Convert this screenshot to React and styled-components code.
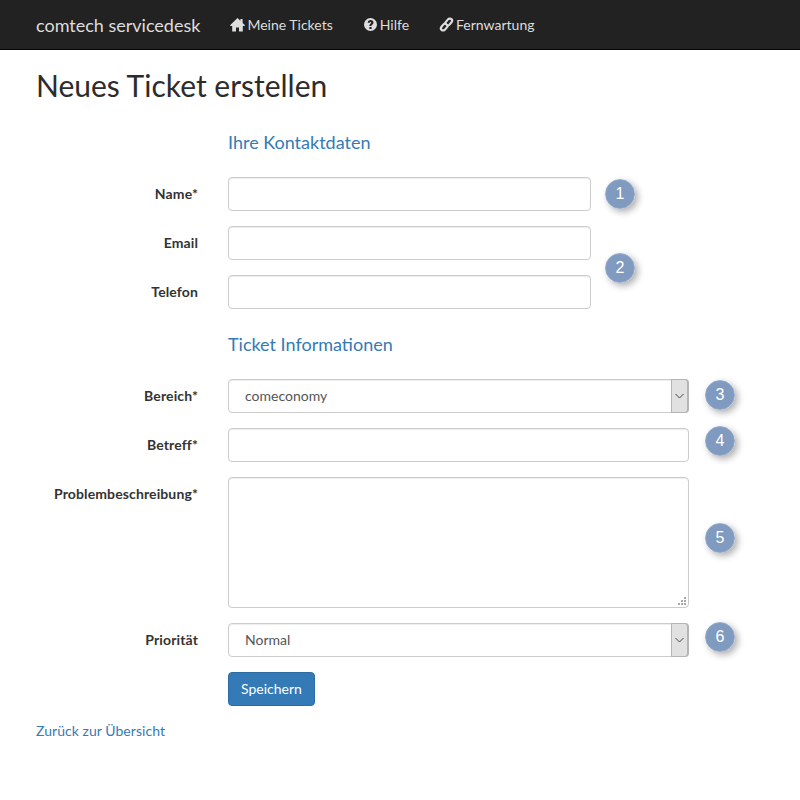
import React from "react";
import styled, { createGlobalStyle } from "styled-components";

const Global = createGlobalStyle`
  * { box-sizing: border-box; }
  html, body { margin: 0; padding: 0; background: #fff; }
  body { font-family: Lato, "Liberation Sans", sans-serif; font-size: 14px; line-height: 20px; color: #333; }
`;

const Navbar = styled.nav`
  display: flex; align-items: center; height: 50px; padding-left: 36px;
  background: #222; border-bottom: 1px solid #080808;
`;
const Brand = styled.a`
  font-size: 18px; line-height: 20px; color: #ddd; text-decoration: none; margin-right: 15px;
`;
const NavLink = styled.a`
  display: flex; align-items: center; gap: 2px; padding: 0 15px; color: #ddd; text-decoration: none;
  font-size: 14px;
  svg { width: 15px; height: 15px; flex: none; fill: #ddd; }
`;
const Main = styled.main`
  padding: 0 36px;
`;
const Title = styled.h1`
  margin: 19px 0 30px; font-size: 30px; line-height: 33px; font-weight: 400; color: #2c2c2c;
`;
const FormGrid = styled.form`
  display: grid; grid-template-columns: 162px 393px 98px 16px 30px; row-gap: 15px;
`;
const Heading = styled.h4`
  grid-column: 2 / 6; margin: ${p => p.$first ? "0 0 10px 30px" : "10px 0 10px 30px"};
  font-size: 18px; line-height: 20px; font-weight: 400; color: #337ab7;
`;
const Label = styled.label`
  grid-column: 1; text-align: right; font-weight: 700; padding-top: 7px; color: #333; letter-spacing: .12px;
`;
const Input = styled.input`
  display: block; height: 34px; margin-left: 30px; width: calc(100% - 30px); padding: 6px 16px;
  border: 1px solid #ccc; border-radius: 4px; background: #fff; font: inherit; color: #555;
  box-shadow: inset 0 1px 1px rgba(0,0,0,.075);
`;
const Short = styled.div`
  grid-column: 2;
`;
const Wide = styled.div`
  grid-column: 2 / 4; position: relative;
`;
const Area = styled.textarea`
  display: block; height: 131px; margin-left: 30px; width: calc(100% - 30px); padding: 6px 16px;
  border: 1px solid #ccc; border-radius: 4px; background: #fff; font: inherit; color: #555; resize: none;
  box-shadow: inset 0 1px 1px rgba(0,0,0,.075);
`;
const Grip = styled.svg`
  position: absolute; right: 3px; bottom: 3px; width: 8px; height: 8px; fill: #a8a8a8; pointer-events: none;
`;
const Select = styled.select`
  display: block; height: 34px; margin-left: 30px; width: calc(100% - 30px); padding: 6px 16px;
  border: 1px solid #ccc; border-radius: 4px; background: #fff; font: inherit; color: #555;
  appearance: none; box-shadow: inset 0 1px 1px rgba(0,0,0,.075);
`;
const Arrow = styled.span`
  position: absolute; top: 0; right: 0; bottom: 0; width: 18px; display: flex;
  align-items: center; justify-content: center; pointer-events: none;
  background: #e1e1e1; border: 1px solid #b4b4b4; border-right-width: 2px; border-radius: 0 4px 4px 0;
`;
const Badge = styled.div`
  grid-column: ${p => p.$wide ? "4 / 6" : "3 / 6"};
  grid-row: ${p => p.$span ? `span ${p.$span}` : "auto"};
  justify-self: ${p => p.$wide ? "end" : "start"};
  margin-left: ${p => p.$wide ? 0 : 14}px;
  align-self: ${p => p.$center ? "center" : "start"};
  margin-top: ${p => p.$top || 0}px;
  width: 30px; height: 30px; border-radius: 50%;
  display: flex; align-items: center; justify-content: center;
  background: radial-gradient(circle, #7f9abf 0%, #819bc0 70%, #8ea6c8 100%);
  border: 1px solid #92a9ca; color: #fff; font-size: 16px; font-family: "Liberation Sans", sans-serif;
  box-shadow: 3px 3px 7px rgba(0,0,0,.32);
`;
const Actions = styled.div`
  grid-column: 2 / 4; padding-left: 30px;
`;
const Button = styled.button`
  display: block; height: 34px; padding: 0 12px; background: #337ab7; color: #fff; font: inherit;
  border: 1px solid #2e6da4; border-radius: 4px;
`;
const BackLink = styled.a`
  display: block; margin-top: 15px; color: #337ab7; text-decoration: none; letter-spacing: .05px;
`;

const Chevron = () => (
  <svg width="9" height="6" viewBox="0 0 9 6" fill="none" stroke="#444" strokeWidth="1">
    <path d="M0.500 1L4.500 5L8.500 1" />
  </svg>
);
const HomeIcon = () => (
  <svg viewBox="0 0 15 15"><path d="M7.500 1L0 8.200L.6 9H2.200V14.500H6V10.500H9V14.500H12.800V9H14.400L15 8.200L12.600 5.900V2H10.400V3.800Z" /></svg>
);
const HelpIcon = () => (
  <svg viewBox="0 0 15 15"><path fillRule="evenodd" d="M7.500 1a6.500 6.500 0 1 0 0 13 6.500 6.500 0 0 0 0-13ZM6.400 10h2.200v2H6.400ZM4.700 5.800C4.800 4.100 6 3.100 7.600 3.100c1.700 0 2.900 1 2.900 2.400 0 1.100-.6 1.700-1.300 2.200-.5.4-.7.6-.7 1.300H6.400c0-1.200.3-1.800 1-2.300.5-.4.9-.6.9-1.100 0-.4-.3-.7-.7-.7-.5 0-.8.3-.9.9Z" /></svg>
);
const LinkIcon = () => (
  <svg viewBox="0 0 15 15" style={{ fill: "none" }} stroke="#ddd" strokeWidth="2.200" strokeLinecap="round">
    <path d="M6.500 5.400L9 2.400C9.900 1.300 11.500 1.300 12.400 2.100 13.300 2.900 13.300 4.200 12.500 5.200L10.500 7.600C9.800 8.400 8.800 8.500 8 8" />
    <path d="M8.500 9.600L6 12.600C5.100 13.700 3.500 13.700 2.600 12.900 1.700 12.100 1.700 10.800 2.500 9.800L4.500 7.400C5.200 6.600 6.200 6.500 7 7" />
  </svg>
);

export default function App() {
  return (
    <>
      <Global />
      <Navbar>
        <Brand href="#">comtech servicedesk</Brand>
        <NavLink href="#"><HomeIcon />Meine Tickets</NavLink>
        <NavLink href="#"><HelpIcon />Hilfe</NavLink>
        <NavLink href="#"><LinkIcon />Fernwartung</NavLink>
      </Navbar>
      <Main>
        <Title>Neues Ticket erstellen</Title>
        <FormGrid onSubmit={e => e.preventDefault()}>
          <Heading $first>Ihre Kontaktdaten</Heading>
          <Label>Name*</Label>
          <Short><Input /></Short>
          <Badge $top={2}>1</Badge>
          <Label>Email</Label>
          <Short><Input /></Short>
          <Badge $span={2} $center>2</Badge>
          <Label>Telefon</Label>
          <Short><Input /></Short>
          <Heading>Ticket Informationen</Heading>
          <Label>Bereich*</Label>
          <Wide>
            <Select defaultValue="comeconomy"><option>comeconomy</option></Select>
            <Arrow><Chevron /></Arrow>
          </Wide>
          <Badge $wide $top={1}>3</Badge>
          <Label>Betreff*</Label>
          <Wide><Input /></Wide>
          <Badge $wide $top={-2}>4</Badge>
          <Label>Problembeschreibung*</Label>
          <Wide>
            <Area />
            <Grip viewBox="0 0 8 8">
              <rect x="6" y="0" width="2" height="2" />
              <rect x="3" y="3" width="2" height="2" />
              <rect x="6" y="3" width="2" height="2" />
              <rect x="0" y="6" width="2" height="2" />
              <rect x="3" y="6" width="2" height="2" />
              <rect x="6" y="6" width="2" height="2" />
            </Grip>
          </Wide>
          <Badge $wide $top={46}>5</Badge>
          <Label>Priorität</Label>
          <Wide>
            <Select defaultValue="Normal"><option>Normal</option></Select>
            <Arrow><Chevron /></Arrow>
          </Wide>
          <Badge $wide $top={-1}>6</Badge>
          <Actions><Button type="button">Speichern</Button></Actions>
        </FormGrid>
        <BackLink href="#">Zurück zur Übersicht</BackLink>
      </Main>
    </>
  );
}
